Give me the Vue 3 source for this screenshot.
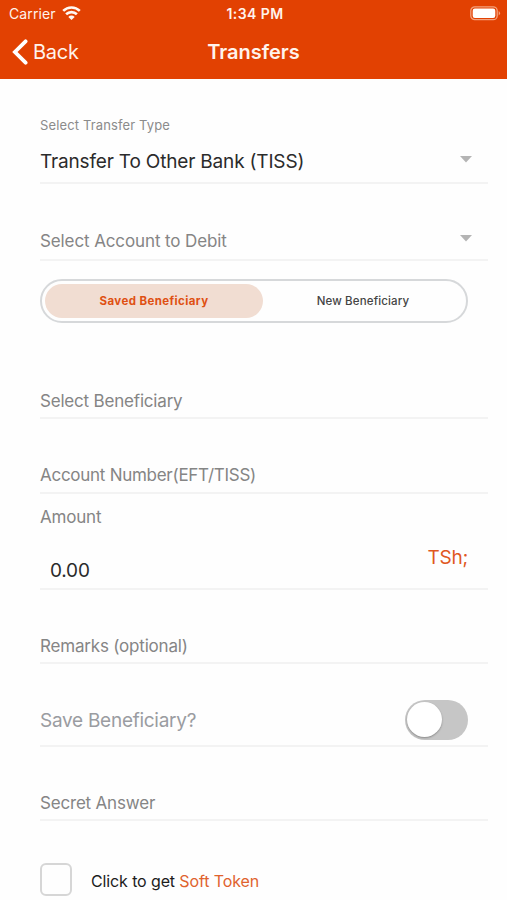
<script setup>
import { ref } from 'vue'

const tab = ref('saved')
const saveBeneficiary = ref(false)
const softToken = ref(false)
</script>

<template>
  <div class="screen">
    <header class="header">
      <div class="status">
        <div class="carrier">
          <span class="carrier-name">Carrier</span>
          <svg class="wifi" viewBox="0 0 19 14">
            <path d="M1.2 4.9 A11.8 11.8 0 0 1 17.8 4.9" />
            <path d="M4.1 8.3 A7.7 7.7 0 0 1 14.9 8.3" />
            <path class="dot" d="M9.5 14 L6.3 10.9 A4.5 4.5 0 0 1 12.7 10.9 Z" />
          </svg>
        </div>
        <span class="time">1:34 PM</span>
        <svg class="battery" viewBox="0 0 31 15">
          <rect class="case" x="0.8" y="0.8" width="26.4" height="12.9" rx="4" />
          <rect class="charge" x="2.7" y="2.6" width="22.6" height="9.3" rx="2.2" />
          <path class="cap" d="M28.7 5 Q31.4 7.2 28.7 9.6 Z" />
        </svg>
      </div>
      <nav class="nav">
        <button class="back">
          <svg class="chevron" viewBox="0 0 16 26"><path d="M13.6 2.3 L2.9 13 L13.6 23.7" /></svg>
          <span class="back-text">Back</span>
        </button>
        <h1 class="title">Transfers</h1>
      </nav>
    </header>

    <main class="form">
      <div class="row type">
        <span class="label">Select Transfer Type</span>
        <div class="select">
          <span class="value">Transfer To Other Bank (TISS)</span>
          <svg class="caret" viewBox="0 0 12 7"><path d="M0 0 H12 L6 6.6 Z" /></svg>
        </div>
      </div>
      <div class="row debit">
        <div class="select">
          <span class="placeholder debit-text">Select Account to Debit</span>
          <svg class="caret" viewBox="0 0 12 7"><path d="M0 0 H12 L6 6.6 Z" /></svg>
        </div>
      </div>

      <div class="segments">
        <button class="segment" :class="{ active: tab === 'saved' }" @click="tab = 'saved'">Saved Beneficiary</button>
        <button class="segment" :class="{ active: tab === 'new' }" @click="tab = 'new'">New Beneficiary</button>
      </div>

      <div class="row beneficiary"><span class="placeholder">Select Beneficiary</span></div>
      <div class="row account"><span class="placeholder account-text">Account Number(EFT/TISS)</span></div>
      <div class="row amount">
        <span class="placeholder amount-text">Amount</span>
        <div class="amount-line">
          <span class="number">0.00</span>
          <span class="currency">TSh;</span>
        </div>
      </div>
      <div class="row remarks"><span class="placeholder">Remarks (optional)</span></div>
      <div class="row save">
        <span class="save-text">Save Beneficiary?</span>
        <button class="toggle" :class="{ on: saveBeneficiary }" @click="saveBeneficiary = !saveBeneficiary">
          <span class="knob"></span>
        </button>
      </div>
      <div class="row secret"><span class="placeholder">Secret Answer</span></div>

      <div class="token">
        <button class="checkbox" :class="{ checked: softToken }" @click="softToken = !softToken"></button>
        <span class="token-text">Click to get <a class="link">Soft Token</a></span>
      </div>
    </main>
  </div>
</template>

<style>
body {
  background: #fefefe;
  overflow: hidden;
}
</style>

<style scoped>
.screen {
  width: 507px;
  height: 900px;
  overflow: hidden;
  background: #fefefe;
  font-family: Inter, "Liberation Sans", sans-serif;
  color: #2b2b2b;
  white-space: nowrap;
}
button {
  border: 0;
  padding: 0;
  margin: 0;
  background: none;
  font: inherit;
  color: inherit;
}
svg {
  display: block;
}
.header {
  box-sizing: border-box;
  height: 79px;
  background: #e24102;
  color: #fff3ec;
}
.status {
  display: grid;
  grid-template-columns: 1fr auto 1fr;
  align-items: center;
  height: 27px;
  padding: 0 6px 0 9px;
}
.carrier {
  display: flex;
  align-items: center;
  gap: 6px;
}
.carrier-name {
  font-size: 14px;
  letter-spacing: 0.1px;
}
.wifi {
  width: 19px;
  height: 14px;
  margin-top: -2px;
  fill: none;
  stroke: #fff8f3;
  stroke-width: 2.6;
}
.wifi .dot {
  fill: #fff8f3;
  stroke: none;
}
.time {
  font-size: 14px;
  font-weight: 600;
  letter-spacing: 0.45px;
}
.battery {
  justify-self: end;
  width: 31px;
  height: 15px;
}
.case {
  fill: none;
  stroke: #f3a17d;
  stroke-width: 1.3;
}
.charge {
  fill: #fff;
}
.cap {
  fill: #f3a17d;
}
.nav {
  display: grid;
  grid-template-columns: 1fr auto 1fr;
  align-items: center;
  height: 50px;
}
.back {
  display: flex;
  align-items: center;
  gap: 5px;
  padding-left: 12px;
}
.chevron {
  width: 16px;
  height: 26px;
  fill: none;
  stroke: #fff;
  stroke-width: 3.8;
  stroke-linecap: round;
  stroke-linejoin: miter;
}
.back-text {
  font-size: 20px;
  letter-spacing: -0.25px;
}
.title {
  margin: 0;
  font-size: 20px;
  font-weight: 600;
}
.form {
  padding-left: 40px;
}
.row {
  box-sizing: border-box;
  width: 448px;
  border-bottom: 2px solid #f3f3f3;
}
.placeholder {
  display: block;
  font-size: 17px;
  line-height: 24px;
  letter-spacing: -0.19px;
  color: #858585;
}
.debit-text {
  letter-spacing: -0.11px;
}
.account-text {
  letter-spacing: -0.27px;
}
.type {
  height: 105px;
  padding-top: 36px;
}
.label {
  display: block;
  font-size: 13px;
  line-height: 20px;
  letter-spacing: 0.13px;
  color: #8b8b8b;
}
.select {
  display: flex;
  align-items: center;
  justify-content: space-between;
  padding-right: 16px;
}
.type .select {
  margin-top: 15px;
}
.value {
  font-size: 19px;
  line-height: 24px;
  letter-spacing: -0.17px;
}
.caret {
  width: 12px;
  height: 7px;
  margin-top: -5px;
  fill: #b4b4b4;
}
.debit {
  height: 77px;
  padding-top: 45px;
}
.segments {
  box-sizing: border-box;
  display: grid;
  grid-template-columns: 218px 1fr;
  width: 428px;
  height: 44px;
  margin-top: 18px;
  padding: 3px;
  border: 2px solid #d6d8da;
  border-radius: 22px;
}
.segment {
  height: 34px;
  border-radius: 17px;
  font-size: 11.5px;
  font-weight: 500;
  letter-spacing: 0.15px;
  color: #444;
}
.segment.active {
  background: #f1ddd2;
  color: #df5012;
  font-weight: 700;
  letter-spacing: 0.4px;
}
.beneficiary {
  height: 96px;
  padding-top: 66px;
}
.account {
  height: 75px;
  padding-top: 44px;
}
.amount {
  height: 96px;
  padding-top: 11px;
}
.amount-line {
  display: flex;
  justify-content: space-between;
  padding: 17px 20px 0 10px;
}
.number {
  margin-top: 13px;
  font-size: 19px;
  line-height: 24px;
  letter-spacing: -0.2px;
}
.currency {
  font-size: 19px;
  line-height: 24px;
  letter-spacing: -0.2px;
  color: #e0581f;
}
.remarks {
  height: 74px;
  padding-top: 44px;
}
.save {
  display: flex;
  align-items: center;
  justify-content: space-between;
  height: 83px;
  padding: 31px 20px 0 0;
}
.save-text {
  font-size: 19px;
  letter-spacing: -0.27px;
  color: #9a9ca1;
}
.toggle {
  box-sizing: border-box;
  display: flex;
  width: 63px;
  height: 40px;
  padding: 2px;
  border-radius: 20px;
  background: #c6c6c6;
}
.toggle.on {
  justify-content: flex-end;
  background: #e24102;
}
.knob {
  width: 35px;
  height: 35px;
  border-radius: 50%;
  background: #fff;
  box-shadow: 0 1px 2px rgba(0, 0, 0, 0.3);
}
.secret {
  height: 74px;
  padding-top: 44px;
}
.token {
  display: flex;
  align-items: center;
  gap: 19px;
  margin-top: 42px;
}
.checkbox {
  box-sizing: border-box;
  width: 32px;
  height: 33px;
  border: 2px solid #d6d6d6;
  border-radius: 6px;
}
.checkbox.checked {
  background: #e24102;
}
.token-text {
  margin-top: 3px;
  font-size: 16px;
  letter-spacing: -0.12px;
  color: #1c1c1c;
}
.link {
  color: #e0632e;
}
</style>
